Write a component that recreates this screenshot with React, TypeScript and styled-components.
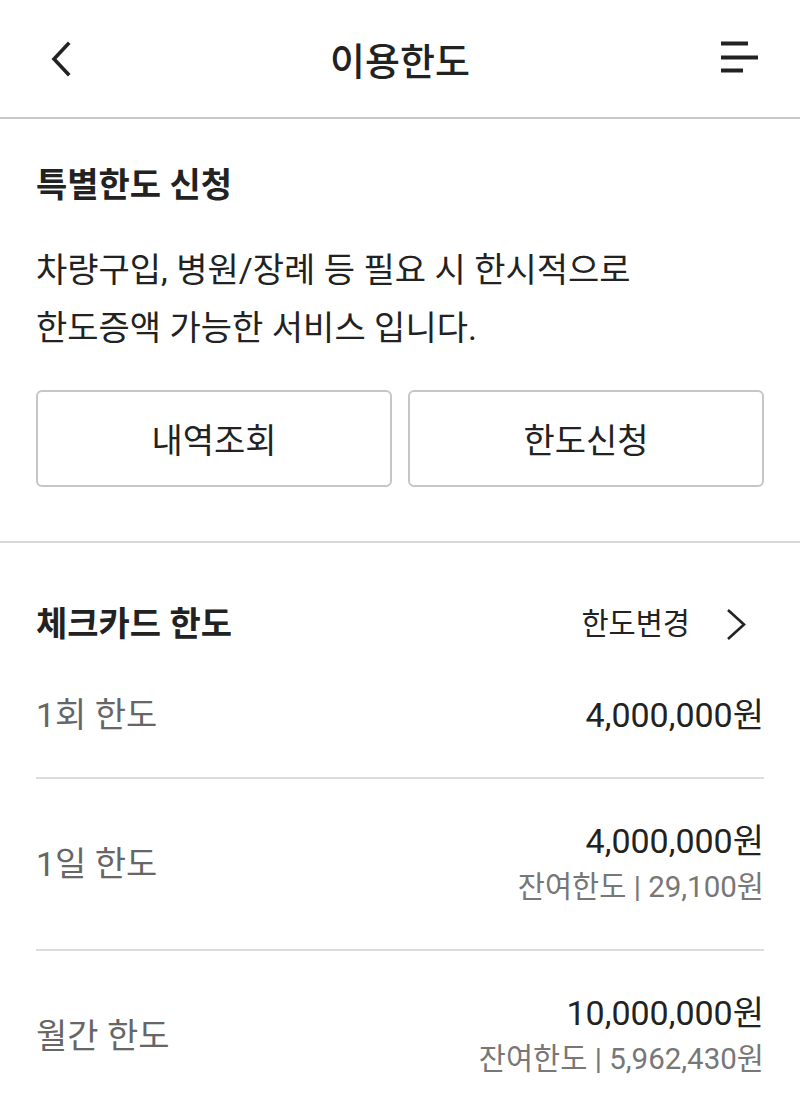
import React from "react";
import styled, { createGlobalStyle } from "styled-components";

const GlobalStyle = createGlobalStyle`
  html, body {
    margin: 0;
    padding: 0;
    background: #ffffff;
  }
  body {
    font-family: Roboto, "Noto Sans CJK KR", "Noto Sans", sans-serif;
    color: #222222;
    -webkit-font-smoothing: antialiased;
  }
  * {
    box-sizing: border-box;
  }
`;

const Page = styled.div`
  width: 800px;
  min-height: 1111px;
  background: #ffffff;
`;

const Header = styled.header`
  display: grid;
  grid-template-columns: 1fr auto 1fr;
  align-items: center;
  height: 119px;
  border-bottom: 2px solid #c8c8c8;
`;

const HeaderTitle = styled.h1`
  margin: 0;
  font-size: 38px;
  font-weight: 500;
  color: #222222;
`;

const HeaderSide = styled.div<{ align: "left" | "right" }>`
  display: flex;
  justify-content: ${(p) => (p.align === "left" ? "flex-start" : "flex-end")};
  padding: ${(p) => (p.align === "left" ? "0 0 0 49px" : "0 42px 0 0")};
`;

const IconButton = styled.button`
  display: flex;
  align-items: center;
  justify-content: center;
  padding: 0;
  border: 0;
  background: none;
  color: #222222;
  cursor: pointer;
`;

const Section = styled.section<{ divided?: boolean }>`
  padding: ${(p) => (p.divided ? "43px 36px 54px" : "58px 36px 0")};
  border-bottom: ${(p) => (p.divided ? "2px solid #d9d9d9" : "none")};
`;

const SectionTitle = styled.h2`
  margin: 0;
  font-size: 34px;
  line-height: 46px;
  font-weight: 700;
  color: #222222;
`;

const Description = styled.p`
  margin: 33px 0 0;
  font-size: 34px;
  line-height: 58px;
  color: #222222;
`;

const ButtonGrid = styled.div`
  display: grid;
  grid-template-columns: 1fr 1fr;
  gap: 16px;
  margin-top: 33px;
`;

const OutlineButton = styled.button`
  height: 97px;
  border: 2px solid #c6c6c6;
  border-radius: 6px;
  background: #ffffff;
  font-family: inherit;
  font-size: 34px;
  color: #222222;
  cursor: pointer;
`;

const SectionHeader = styled.div`
  display: flex;
  align-items: center;
  justify-content: space-between;
  margin-bottom: 6px;
`;

const LinkButton = styled.button`
  display: flex;
  align-items: center;
  gap: 35px;
  padding: 0 17px 0 0;
  border: 0;
  background: none;
  font-family: inherit;
  font-size: 29.5px;
  line-height: 46px;
  color: #222222;
  cursor: pointer;
`;

const LimitRow = styled.div<{ last?: boolean }>`
  display: flex;
  align-items: center;
  justify-content: space-between;
  padding: 39px 0;
  border-bottom: ${(p) => (p.last ? "none" : "2px solid #dcdcdc")};
`;

const RowLabel = styled.div`
  font-size: 34px;
  line-height: 46px;
  color: #666666;
`;

const RowValues = styled.div`
  display: flex;
  flex-direction: column;
  align-items: flex-end;
`;

const Amount = styled.div`
  font-size: 34px;
  line-height: 46px;
  color: #222222;
`;

const Remaining = styled.div`
  font-size: 29.5px;
  line-height: 46px;
  color: #777777;
`;

const BackIcon = () => (
  <svg width="24" height="36" viewBox="0 0 24 36" fill="none">
    <path d="M19 3 L5 18 L19 33" stroke="#222" strokeWidth="3.6" strokeLinecap="square" strokeLinejoin="miter" />
  </svg>
);

const MenuIcon = () => (
  <svg width="38" height="36" viewBox="0 0 38 36" fill="#222">
    <rect x="1" y="0.5" width="27" height="4" />
    <rect x="1" y="14.5" width="37" height="4" />
    <rect x="1" y="27.5" width="22" height="4" />
  </svg>
);

const ChevronRight = () => (
  <svg width="22" height="37" viewBox="0 0 22 37" fill="none">
    <path d="M3 4 L19 18.5 L3 33" stroke="#222" strokeWidth="2.6" />
  </svg>
);

interface Limit {
  label: string;
  amount: string;
  remaining?: string;
}

const limits: Limit[] = [
  { label: "1회 한도", amount: "4,000,000원" },
  { label: "1일 한도", amount: "4,000,000원", remaining: "29,100원" },
  { label: "월간 한도", amount: "10,000,000원", remaining: "5,962,430원" },
];

export default function App() {
  return (
    <Page>
      <GlobalStyle />
      <Header>
        <HeaderSide align="left">
          <IconButton aria-label="뒤로">
            <BackIcon />
          </IconButton>
        </HeaderSide>
        <HeaderTitle>이용한도</HeaderTitle>
        <HeaderSide align="right">
          <IconButton aria-label="메뉴">
            <MenuIcon />
          </IconButton>
        </HeaderSide>
      </Header>

      <Section divided>
        <SectionTitle>특별한도 신청</SectionTitle>
        <Description>
          차량구입, 병원/장례 등 필요 시 한시적으로
          <br />
          한도증액 가능한 서비스 입니다.
        </Description>
        <ButtonGrid>
          <OutlineButton>내역조회</OutlineButton>
          <OutlineButton>한도신청</OutlineButton>
        </ButtonGrid>
      </Section>

      <Section>
        <SectionHeader>
          <SectionTitle>체크카드 한도</SectionTitle>
          <LinkButton>
            한도변경
            <ChevronRight />
          </LinkButton>
        </SectionHeader>
        {limits.map((item, i) => (
          <LimitRow key={item.label} last={i === limits.length - 1}>
            <RowLabel>{item.label}</RowLabel>
            <RowValues>
              <Amount>{item.amount}</Amount>
              {item.remaining && <Remaining>잔여한도 | {item.remaining}</Remaining>}
            </RowValues>
          </LimitRow>
        ))}
      </Section>
    </Page>
  );
}
